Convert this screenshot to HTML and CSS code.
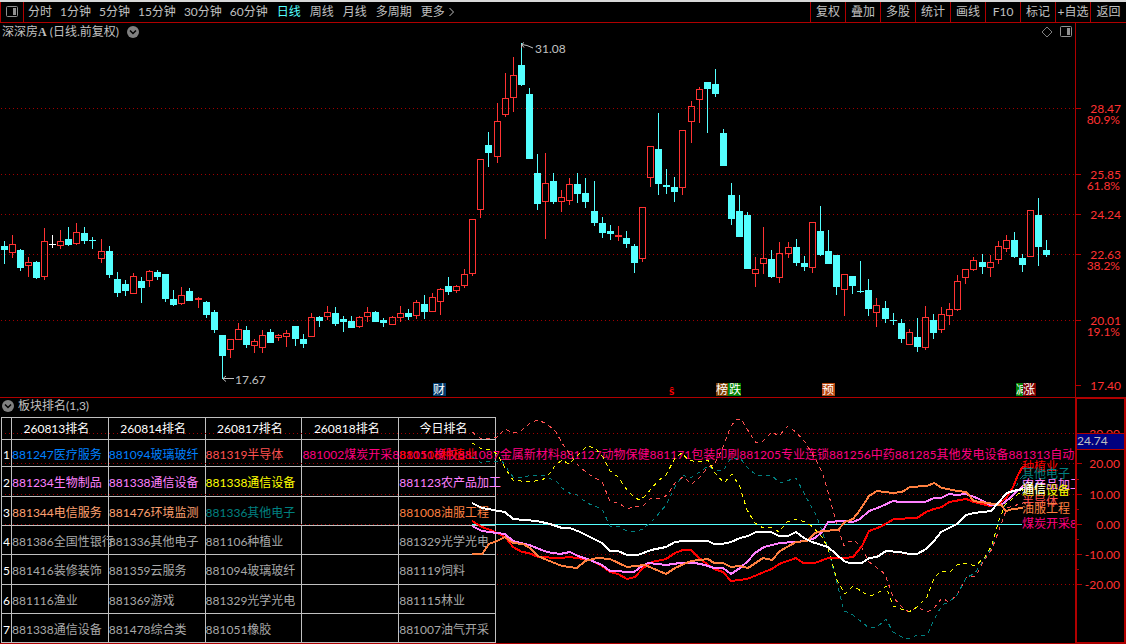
FILE: index.html
```html
<!DOCTYPE html>
<html lang="zh-CN">
<head>
<meta charset="utf-8">
<title>深深房A 日线</title>
<link rel="stylesheet" href="styles.css">
</head>
<body>
<main class="terminal">
  <nav class="toolbar" aria-label="周期">
    <button class="layout-btn" aria-label="布局"><svg class="icon" width="14" height="12" viewBox="0 0 14 12"><rect x="1.5" y="0.5" width="11" height="10" rx="1" fill="none" stroke="#909090"/><rect x="8" y="2" width="3" height="7" fill="#909090"/></svg></button>
    <div class="periods">
      <button>分时</button><button>1分钟</button><button>5分钟</button><button>15分钟</button><button>30分钟</button><button>60分钟</button><button class="active">日线</button><button>周线</button><button>月线</button><button>多周期</button><button class="more">更多<svg width="7" height="12" viewBox="0 0 7 12"><path d="M1.5 2 L5.5 6 L1.5 10" fill="none" stroke="#c0c0c0"/></svg></button>
    </div>
    <div class="tools">
      <button>复权</button><button>叠加</button><button>多股</button><button>统计</button><button>画线</button><button>F10</button><button>标记</button><button>+自选</button><button>返回</button>
    </div>
  </nav>

  <section class="panel price" aria-label="K线图">
    <svg class="plot" viewBox="0 23 1126 375" preserveAspectRatio="xMinYMin meet">
      <g class="grid-lines">
        <path d="M1 108.5H1075M1 174.5H1075M1 214.5H1075M1 254.5H1075M1 320.5H1075"/>
      </g>
      <path class="frame" d="M1075.5 23V397M0 397.5H1126M1076 108.5H1081M1076 174.5H1081M1076 214.5H1081M1076 254.5H1081M1076 320.5H1081M1076 385.5H1081"/>
      <g id="candles" shape-rendering="crispEdges"></g>
      <g class="axis-text" text-anchor="end">
        <text x="1121" y="113">28.47</text><text x="1120" y="124">80.9%</text>
        <text x="1121" y="179">25.85</text><text x="1120" y="190">61.8%</text>
        <text x="1121" y="219">24.24</text>
        <text x="1121" y="259">22.63</text><text x="1120" y="270">38.2%</text>
        <text x="1121" y="325">20.01</text><text x="1120" y="336">19.1%</text>
        <text x="1121" y="390">17.40</text>
      </g>
      <g class="callout">
        <path d="M521.5 48V44.5L524 42.5M522 44.5L527 45.5L533 48M522 45L524 47.5M223 378.5H234M223 378.5L226 376M223 379L226 381.5"/>
        <text x="535" y="53">31.08</text>
        <text x="235" y="384">17.67</text>
      </g>
      <g class="marks">
        <rect x="433" y="383" width="13" height="13" fill="#003b6f"/><text x="433" y="394">财</text>
        <text class="split" x="669" y="395">ŝ</text>
        <rect x="716" y="383" width="12" height="13" fill="#804000"/><text x="716" y="394">榜</text>
        <rect x="728" y="383" width="13" height="13" fill="#008000"/><text x="729" y="394">跌</text>
        <rect x="822" y="383" width="13" height="13" fill="#b84810"/><text x="822" y="394">预</text>
        <rect x="1016" y="383" width="13" height="13" fill="#008000"/><text x="1016" y="394">减</text>
        <rect x="1023" y="383" width="13" height="13" fill="#800000"/><text x="1023" y="394">涨</text>
      </g>
    </svg>
    <header class="panel-head">
      <h1>深深房<b>A</b> (日线.前复权)</h1>
      <button aria-label="展开"><svg class="icon" width="12" height="12" viewBox="0 0 12 12"><circle cx="6" cy="6" r="6" fill="#808080"/><path d="M3 4.5 L6 7.5 L9 4.5" fill="none" stroke="#000" stroke-width="1.5"/></svg></button>
      <span class="head-tools">
        <button aria-label="标记"><svg class="icon" width="12" height="12" viewBox="0 0 12 12"><path d="M6 1 L11 6 L6 11 L1 6 Z" fill="none" stroke="#808080"/></svg></button>
        <button aria-label="侧栏"><svg class="icon" width="12" height="12" viewBox="0 0 12 12"><rect x="0.5" y="0.5" width="11" height="10" rx="1" fill="none" stroke="#909090"/><rect x="7" y="2" width="3" height="7" fill="#909090"/></svg></button>
      </span>
    </header>
  </section>

  <section class="panel rank" aria-label="板块排名">
    <div class="rank-body">
      <header class="panel-head">
        <button aria-label="展开"><svg class="icon" width="12" height="12" viewBox="0 0 12 12"><circle cx="6" cy="6" r="6" fill="#808080"/><path d="M3 4.5 L6 7.5 L9 4.5" fill="none" stroke="#000" stroke-width="1.5"/></svg></button>
        <h2>板块排名(1,3)</h2>
      </header>
      <div class="table-clip">
      <table>
        <colgroup><col class="c-no"><col><col><col><col><col></colgroup>
        <thead><tr><th></th><th>260813排名</th><th>260814排名</th><th>260817排名</th><th>260818排名</th><th>今日排名</th></tr></thead>
        <tbody>
          <tr class="short"><th>1</th><td class="blue">881247医疗服务</td><td class="blue">881094玻璃玻纤</td><td class="coral">881319半导体</td><td class="magenta">881002煤炭开采881051橡胶881087金属新材料881127动物保健881171包装印刷881205专业连锁881256中药881285其他发电设备881313自动化设备</td><td class="red">881106种植业</td></tr>
          <tr class="tall"><th>2</th><td class="pink">881234生物制品</td><td class="pink">881338通信设备</td><td class="yellow">881338通信设备</td><td></td><td class="pink">881123农产品加工</td></tr>
          <tr><th>3</th><td class="peach">881344电信服务</td><td class="peach">881476环境监测</td><td class="teal">881336其他电子</td><td></td><td class="orange">881008油服工程</td></tr>
          <tr><th>4</th><td>881386全国性银行</td><td>881336其他电子</td><td>881106种植业</td><td></td><td>881329光学光电</td></tr>
          <tr class="tall"><th>5</th><td>881416装修装饰</td><td>881359云服务</td><td>881094玻璃玻纤</td><td></td><td>881119饲料</td></tr>
          <tr><th>6</th><td>881116渔业</td><td>881369游戏</td><td>881329光学光电</td><td></td><td>881115林业</td></tr>
          <tr><th>7</th><td>881338通信设备</td><td>881478综合类</td><td>881051橡胶</td><td></td><td>881007油气开采</td></tr>
        </tbody>
      </table>
      </div>
    </div>
    <svg class="plot" viewBox="0 398 1126 246" preserveAspectRatio="xMinYMin meet">
      <defs><clipPath id="plot-area"><rect x="0" y="398" width="1075" height="245"/></clipPath></defs>
      <g class="grid-lines">
        <path d="M5 433.5H1075M5 463.5H1075M5 494.5H1075M5 524.5H1075M497 554.5H1075M497 584.5H1075"/>
      </g>
      <path d="M472 524.5H1022" stroke="#54ffff"/>
      <g id="series" shape-rendering="crispEdges"></g>
      <g class="end-labels" clip-path="url(#plot-area)">
        <text x="1022" y="471" fill="#f00">种植业</text>
        <text x="1022" y="478" fill="#008080">其他电子</text>
        <text x="1022" y="489" fill="#ff80ff">农产品加工</text>
        <text x="1022" y="495" fill="#ff0">通信设备</text>
        <text x="1022" y="493" fill="#fff">通信</text>
        <text x="1022" y="506" fill="#ff5050">半导体</text>
        <text x="1022" y="513" fill="#ff8040">油服工程</text>
        <text x="1022" y="528" fill="#ff0080">煤炭开采881051</text>
      </g>
      <g class="axis-text" text-anchor="end">
        <text x="1120" y="438">30.00</text><text x="1120" y="468">20.00</text><text x="1120" y="499">10.00</text>
        <text x="1120" y="529">0.00</text><text x="1120" y="559">-10.00</text><text x="1120" y="589">-20.00</text>
      </g>
      <rect x="1077" y="433" width="48" height="17" fill="#000080"/>
      <path class="frame" d="M1077 433.5H1125M1077 449.5H1125M0 643.5H1076M1077 463.5H1082M1077 494.5H1082M1077 524.5H1082M1077 554.5H1082M1077 584.5H1082M1077 479.5H1079M1077 509.5H1079M1077 539.5H1079M1077 569.5H1079"/>
      <rect class="axis-box" x="1076" y="398" width="49" height="245"/>
      <text class="value" x="1077" y="445">24.74</text>
    </svg>
  </section>
</main>
<script src="chart.js"></script>
</body>
</html>
```
FILE: styles.css
```css
* { box-sizing: border-box; }

body {
  margin: 0;
  background: #000;
  color: #c0c0c0;
  font: 12px/16px Lato, "Noto Sans CJK SC", sans-serif;
}

button {
  display: flex;
  align-items: center;
  justify-content: center;
  margin: 0;
  padding: 0;
  border: 0;
  background: none;
  color: inherit;
  font: inherit;
  white-space: nowrap;
  cursor: pointer;
}

.icon { display: block; }

.terminal {
  display: grid;
  grid-template-rows: 23px minmax(0, 375fr) minmax(0, 246fr);
  height: 100vh;
  overflow: hidden;
}

.toolbar {
  display: flex;
  border-top: 2px solid #d8d8d8;
  border-bottom: 1px solid #b00000;
}

.layout-btn {
  width: 24px;
  border-left: 1px solid #b00000;
  border-right: 1px solid #b00000;
}

.periods {
  display: flex;
  gap: 8px;
  padding-left: 4px;
}

.periods .active { color: #54ffff; }

.periods .active,
.periods .active ~ button { padding-left: 1px; }

.more { gap: 3px; }

.tools {
  display: flex;
  margin-left: auto;
}

.tools button {
  width: 35px;
  border-left: 1px solid #b00000;
}

.tools button:last-child { width: 36px; }

.panel {
  display: grid;
  grid-template: minmax(0, 1fr) / minmax(0, 1fr);
}

.panel > * { grid-area: 1 / 1; }

.plot {
  display: block;
  width: 100%;
  height: 100%;
  pointer-events: none;
}

.panel-head {
  display: flex;
  align-items: center;
  align-self: start;
  gap: 8px;
  height: 18px;
  padding-left: 2px;
}

h1, h2 {
  margin: 0;
  font: inherit;
}

h1 b { font-family: "Liberation Serif", serif; }

.head-tools {
  display: flex;
  gap: 7px;
  margin-left: auto;
  padding-right: 54px;
}

.rank-body {
  min-width: 0;
  padding-bottom: 1px;
}

.rank-body .panel-head {
  gap: 4px;
  height: 16px;
  margin-bottom: 3px;
}

.table-clip {
  margin-right: 51px;
  padding-left: 1px;
  overflow: hidden;
}

table {
  width: 495px;
  table-layout: fixed;
  border-collapse: collapse;
}

.c-no { width: 10px; }

th, td {
  height: 29px;
  padding: 3px 0 0;
  border: 1px solid #c0c0c0;
  color: #a8a8a8;
  font-weight: 400;
  text-align: left;
  white-space: nowrap;
}

th { color: #fff; }

tbody th { padding-left: 1px; }

.short > * { height: 27px; }

.tall > * { height: 30px; }

thead th {
  height: 22px;
  padding: 1px 7px 0 0;
  text-align: center;
}

.blue { color: #0080ff; }
.coral { color: #ff5050; }
.magenta { color: #ff0080; }
.red { color: #f00; }
.pink { color: #ff80ff; }
.yellow { color: #ff0; }
.peach { color: #ffa070; }
.teal { color: #008080; }
.orange { color: #ff8040; }

.grid-lines path {
  fill: none;
  stroke: #a00000;
  stroke-dasharray: 1 3;
}

.frame {
  fill: none;
  stroke: #b00000;
}

.axis-box {
  fill: none;
  stroke: #b00000;
  stroke-width: 2;
}

.axis-text { fill: #ff3232; }

.callout path {
  fill: none;
  stroke: #c0c0c0;
}

.callout text, .value { fill: #c0c0c0; }

.marks text { fill: #fff; }

.marks .split {
  fill: #f00;
  font-weight: 700;
}
```
FILE: chart.js
```js
// Each candle: centre x, high, low, body top, body bottom, kind (r = up, c = down, w = flat)
const candles = `4 241 264 246 250 c;12 235 258 244 253 r;20 249 271 250 268 c;28 257 277 262 266 r;36 261 279 262 278 c;44 228 280 241 277 r;52 235 248 244 245 w;60 230 249 241 246 r;68 227 246 239 245 c;76 223 245 232 244 r;84 227 244 233 241 c;92 237 249 240 241 c;101 239 263 251 259 r;109 246 278 251 275 c;117 272 297 279 293 c;125 280 296 284 291 c;133 273 294 276 294 r;141 277 303 281 288 c;149 270 287 271 281 r;157 270 280 272 277 c;165 274 302 274 299 c;173 290 306 299 305 c;181 287 305 295 304 r;189 288 301 291 301 c;198 297 308 298 300 r;206 301 318 302 315 c;214 310 333 312 330 c;222 335 379 335 356 c;230 339 358 339 350 r;238 323 340 329 340 r;246 326 348 330 345 c;254 339 353 341 346 r;262 330 353 335 348 r;270 329 343 332 343 c;278 334 341 335 338 r;286 330 347 333 337 r;295 326 346 326 339 c;303 334 348 339 344 c;311 313 337 317 337 r;319 316 327 317 321 c;327 306 320 312 317 r;335 307 326 313 324 c;343 316 332 319 322 c;351 316 328 321 328 c;359 316 328 317 327 r;367 307 322 312 317 r;375 311 322 312 322 c;383 318 327 320 323 c;392 316 325 317 325 r;400 306 322 313 318 r;408 309 320 313 317 c;416 300 319 302 316 r;424 295 319 304 312 c;432 293 312 297 312 r;440 288 315 289 302 r;448 277 295 286 292 c;456 285 293 286 291 r;464 269 288 274 286 r;472 219 276 219 274 r;480 159 218 159 210 r;488 132 167 145 153 c;497 103 163 121 157 r;505 73 117 98 115 r;513 57 112 75 98 r;521 43 86 65 85 c;529 88 159 94 159 c;537 154 210 173 204 c;545 153 239 183 202 r;553 173 204 181 202 c;561 190 212 197 202 r;569 178 205 184 201 r;577 173 203 184 194 c;585 178 208 193 202 c;594 181 226 211 223 c;602 217 238 223 233 c;610 225 240 231 234 c;618 226 241 235 237 r;626 231 248 238 244 c;634 244 273 246 263 c;642 207 262 207 259 r;650 146 187 146 178 r;658 113 195 149 184 c;666 169 194 185 187 c;674 177 202 187 192 c;682 130 195 130 188 r;691 101 143 106 122 r;699 87 123 89 100 r;707 82 133 82 89 c;715 69 97 84 94 c;723 129 166 133 166 c;731 183 225 195 219 c;739 195 237 211 237 c;747 212 269 215 269 c;755 257 287 269 274 r;763 227 274 258 264 r;771 250 278 259 277 c;779 242 283 253 278 r;788 242 258 247 254 r;796 239 266 247 263 c;804 256 271 263 267 c;812 222 273 222 268 r;820 206 256 231 255 c;828 230 264 251 264 c;836 255 295 255 287 c;844 274 316 274 290 r;852 276 294 276 286 c;860 261 293 291 292 c;868 279 316 290 309 c;876 298 327 305 313 r;885 301 323 308 319 c;893 313 325 320 321 c;901 319 343 323 339 c;909 329 345 332 345 r;917 318 352 337 347 c;925 306 350 317 348 r;933 314 339 320 333 c;941 307 333 314 330 r;949 303 325 309 316 r;957 275 311 281 310 r;965 269 284 269 278 r;973 257 271 260 270 r;982 254 274 262 267 c;990 255 277 262 268 r;998 241 264 246 260 r;1006 235 252 240 249 r;1014 232 258 240 257 c;1022 254 272 258 265 c;1030 210 257 210 257 r;1038 198 266 215 247 c;1046 240 257 250 255 c`;

const series = [
  { color: '#ff5050', dashed: true, points: '472,432 480,438 488,439 497,437 505,429 513,433 521,431 530,423 538,420 547,424 556,432 562,443 577,464 587,473 602,482 610,501 620,504 627,509 633,507 643,506 651,498 663,498 668,494 675,483 683,477 692,484 700,477 708,467 714,465 722,450 731,426 737,419 741,419 747,429 756,443 762,442 772,432 779,436 788,426 796,432 805,442 815,458 822,472 828,492 835,518 844,546 848,542 855,541 862,548 869,562 885,574 893,597 902,607 909,612 917,607 927,612 934,608 942,598 949,602 957,595 966,578 976,576 983,562 992,549 1002,522 1007,508 1023,503' },
  { color: '#008080', dashed: true, points: '472,457 482,463 490,461 502,461 513,477 523,478 530,475 545,476 557,482 562,488 571,494 577,495 587,503 602,509 610,526 620,527 627,531 635,532 643,529 655,518 666,505 675,487 683,475 690,478 700,472 708,466 715,470 723,471 731,458 740,458 747,467 756,475 771,475 780,483 796,478 805,495 817,517 828,548 838,587 844,611 850,613 858,619 869,628 877,627 886,619 893,632 902,637 909,639 917,635 927,635 934,620 942,605 949,602 957,595 966,578 975,573 992,547 998,523 1005,505 1023,475' },
  { color: '#ffff00', dashed: true, points: '472,443 482,449 489,449 497,454 505,468 513,480 529,482 542,480 547,477 555,466 562,460 569,464 578,455 587,446 595,448 603,457 610,471 618,477 627,490 635,498 640,500 645,496 658,481 666,475 675,458 682,453 688,460 698,462 708,460 715,473 724,483 732,474 740,487 747,510 755,523 763,528 772,527 779,532 787,522 795,519 805,522 813,527 822,537 828,548 837,580 845,594 853,586 869,596 877,594 886,586 893,606 909,612 917,607 927,597 934,578 940,572 951,571 957,565 965,563 975,566 985,557 992,545 998,523 1005,505 1023,490' },
  { color: '#ff0000', points: '472,521 482,527 493,531 505,537 513,547 522,552 529,553 538,557 560,558 570,557 590,560 602,566 610,572 618,574 627,579 635,577 643,568 652,562 666,559 675,553 683,550 691,550 698,557 707,564 714,569 723,572 731,581 747,579 757,575 764,572 772,569 779,564 796,558 803,563 815,563 828,558 845,558 853,557 862,546 869,531 880,527 894,519 917,518 926,512 934,509 942,507 949,502 966,499 974,502 990,506 999,504 1007,497 1013,487 1018,475 1023,466' },
  { color: '#ff80ff', points: '472,526 482,531 505,534 513,541 529,545 547,552 560,554 570,552 578,556 590,560 602,565 610,571 634,572 642,566 648,563 666,565 680,563 695,563 705,565 714,568 723,568 731,574 740,568 748,561 755,553 764,547 780,543 807,541 815,538 822,532 828,522 843,521 853,522 860,519 869,511 880,507 893,501 900,502 925,502 934,498 941,498 949,494 957,495 966,494 977,498 990,505 1001,505 1010,498 1023,486' },
  { color: '#ff8040', points: '472,554 482,554 489,544 497,541 505,537 513,543 523,544 530,548 538,556 547,560 562,566 577,568 585,561 597,558 610,559 627,567 645,565 666,574 675,568 691,561 708,559 714,563 723,563 731,567 740,566 748,568 763,558 772,560 780,551 796,542 807,541 815,533 822,531 838,530 845,522 853,519 860,510 869,496 877,491 893,493 902,492 910,487 927,486 934,483 942,488 958,491 966,492 974,501 987,503 1001,505 1006,511 1013,509 1023,508' },
  { color: '#ffffff', points: '472,503 482,508 505,512 513,519 537,521 550,524 562,528 570,528 580,532 594,539 602,543 610,551 618,551 627,555 638,555 651,550 666,547 675,542 683,541 708,541 714,544 722,544 731,542 740,538 748,536 756,532 771,532 779,536 788,536 796,532 804,538 812,542 828,547 844,561 849,563 862,563 869,558 877,557 886,551 900,552 909,554 917,554 926,549 934,541 941,532 949,528 957,524 966,515 974,513 991,511 998,503 1007,493 1013,491 1023,489' }
];

const colors = { r: '#ff3232', c: '#54ffff', w: '#ffffff' };

function add(parent, name, attrs) {
  const el = document.createElementNS('http://www.w3.org/2000/svg', name);
  for (const key in attrs) el.setAttribute(key, attrs[key]);
  parent.appendChild(el);
}

const candleLayer = document.getElementById('candles');
for (const row of candles.split(';')) {
  const parts = row.split(' ');
  const [x, high, low, top, bottom] = parts.map(Number);
  const kind = parts[5];
  const fill = colors[kind];
  if (kind === 'r') {
    add(candleLayer, 'rect', { x: x, y: high, width: 1, height: top - high, fill });
    add(candleLayer, 'rect', { x: x, y: bottom, width: 1, height: low - bottom, fill });
    add(candleLayer, 'rect', { x: x - 2.5, y: top + 0.5, width: 6, height: bottom - top - 1, fill: 'none', stroke: fill });
  } else {
    add(candleLayer, 'rect', { x: x, y: high, width: 1, height: low - high, fill });
    add(candleLayer, 'rect', { x: x - 3, y: top, width: 7, height: bottom - top, fill });
  }
}

const seriesLayer = document.getElementById('series');
for (const line of series) {
  const attrs = { points: line.points, fill: 'none', stroke: line.color, 'stroke-width': line.dashed ? 1 : 2 };
  if (line.dashed) attrs['stroke-dasharray'] = '4 4';
  add(seriesLayer, 'polyline', attrs);
}
```
